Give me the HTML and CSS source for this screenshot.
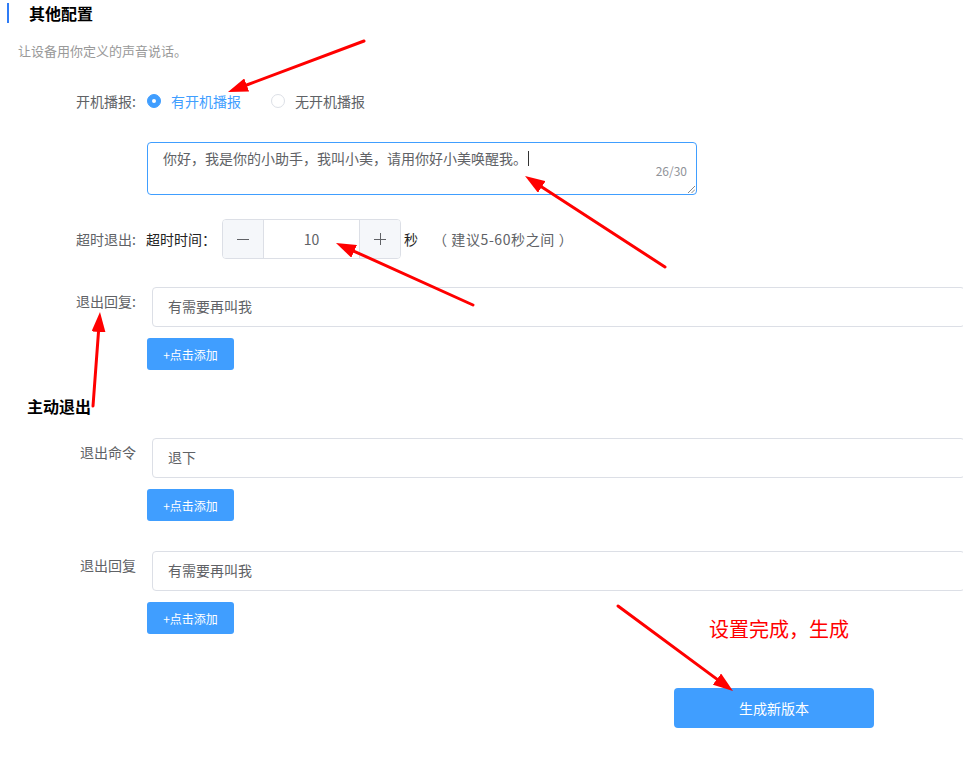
FILE: index.html
```html
<!DOCTYPE html>
<html lang="zh">
<head>
<meta charset="utf-8">
<link rel="stylesheet" href="styles.css">
</head>
<body>
<div class="page">
  <div class="title">其他配置</div>
  <div class="subtitle">让设备用你定义的声音说话。</div>

  <div class="row row-radio">
    <div class="label">开机播报:</div>
    <div class="radios">
      <span class="radio checked"><span class="dot"></span></span>
      <span class="radio-text active">有开机播报</span>
      <span class="radio"></span>
      <span class="radio-text">无开机播报</span>
    </div>
  </div>

  <div class="textarea">
    <span class="ta-text">你好，我是你的小助手，我叫小美，请用你好小美唤醒我。</span><span class="caret"></span>
    <span class="count">26/30</span>
    <svg class="resize" width="8" height="8" viewBox="0 0 8 8"><path d="M1 8 L8 1 M4.5 8 L8 4.5" stroke="#888" stroke-width="1"/></svg>
  </div>

  <div class="row row-timeout">
    <div class="label">超时退出:</div>
    <div class="timeout-name">超时时间：</div>
    <div class="number">
      <span class="num-btn minus"><svg width="12" height="12" viewBox="0 0 12 12"><path d="M0 6.5 H12" stroke="#606266" stroke-width="1"/></svg></span>
      <span class="num-val">10</span>
      <span class="num-btn plus"><svg width="12" height="12" viewBox="0 0 12 12"><path d="M0 6.5 H12 M6.5 0 V12" stroke="#606266" stroke-width="1"/></svg></span>
    </div>
    <div class="unit">秒</div>
    <div class="hint">（ 建议5-60秒之间 ）</div>
  </div>

  <div class="row row-field r1">
    <div class="label lab-top">退出回复:</div>
    <div class="input">有需要再叫我</div>
  </div>
  <button class="add">+点击添加</button>

  <div class="section">主动退出</div>

  <div class="row row-field r2">
    <div class="label lab-top">退出命令</div>
    <div class="input">退下</div>
  </div>
  <button class="add">+点击添加</button>

  <div class="row row-field r3">
    <div class="label lab-top">退出回复</div>
    <div class="input">有需要再叫我</div>
  </div>
  <button class="add">+点击添加</button>

  <div class="submit-wrap"><button class="submit">生成新版本</button></div>

  <div class="note">设置完成，生成</div>

  <svg class="arrows" width="963" height="760" viewBox="0 0 963 760">
    <defs>
      <marker id="ah" markerWidth="20" markerHeight="14" refX="0" refY="7" orient="auto" markerUnits="userSpaceOnUse">
        <path d="M0,0 L20,7 L0,14 z" fill="#ff0000"/>
      </marker>
    </defs>
    <g stroke="#ff0000" stroke-width="3" fill="none" stroke-linecap="round">
      <line x1="364" y1="41" x2="246.7" y2="85" marker-end="url(#ah)"/>
      <line x1="665" y1="267" x2="541.8" y2="186.9" marker-end="url(#ah)"/>
      <line x1="473" y1="305" x2="354.2" y2="251.3" marker-end="url(#ah)"/>
      <line x1="93" y1="406" x2="98.5" y2="331.9" marker-end="url(#ah)"/>
      <line x1="618" y1="606" x2="716.9" y2="679.1" marker-end="url(#ah)"/>
    </g>
  </svg>
</div>
</body>
</html>
```

FILE: styles.css
```css
html, body {
  margin: 0;
  padding: 0;
  background: #fff;
}
body {
  width: 963px;
  height: 760px;
  overflow: hidden;
  font-family: "Noto Sans CJK SC", "Noto Sans", sans-serif;
  font-size: 14px;
  color: #606266;
}
.page {
  position: relative;
  width: 963px;
  height: 760px;
  overflow: hidden;
}
.title {
  margin: 3px 0 0 7px;
  border-left: 2px solid #2f7cf6;
  padding-left: 20px;
  height: 20px;
  line-height: 20px;
  font-size: 16px;
  font-weight: bold;
  color: #000;
}
.subtitle {
  margin: 21px 0 0 18px;
  font-size: 13px;
  line-height: 14px;
  color: #999;
}
.row {
  display: flex;
  align-items: center;
}
.label {
  width: 136px;
  flex: none;
  text-align: right;
  color: #606266;
  font-size: 14px;
  line-height: 20px;
}
.row-radio {
  margin-top: 33px;
  height: 20px;
}
.radios {
  display: flex;
  align-items: center;
  margin-left: 11px;
}
.radio {
  width: 12px;
  height: 12px;
  border: 1px solid #dcdfe6;
  border-radius: 50%;
  background: #fff;
  display: flex;
  align-items: center;
  justify-content: center;
  margin-right: 10px;
}
.radio.checked {
  background: #409eff;
  border-color: #409eff;
}
.radio .dot {
  width: 4px;
  height: 4px;
  border-radius: 50%;
  background: #fff;
}
.radio-text {
  line-height: 20px;
  color: #606266;
  margin-right: 30px;
}
.radio-text.active {
  color: #409eff;
}
.textarea {
  position: relative;
  box-sizing: border-box;
  margin: 31px 0 0 147px;
  width: 550px;
  height: 53px;
  border: 1px solid #409eff;
  border-radius: 4px;
  padding: 5px 15px;
  line-height: 20px;
  color: #606266;
}
.caret {
  display: inline-block;
  width: 1px;
  height: 15px;
  background: #333;
  vertical-align: -2px;
  margin-left: 1px;
}
.count {
  position: absolute;
  right: 9px;
  top: 20px;
  font-size: 12px;
  line-height: 16px;
  color: #909399;
}
.resize {
  position: absolute;
  right: 1px;
  bottom: 1px;
}
.row-timeout {
  margin-top: 24px;
  height: 40px;
}
.timeout-name {
  margin-left: 10px;
  width: 70px;
  color: #222;
  line-height: 20px;
}
.number {
  margin-left: 6px;
  box-sizing: border-box;
  width: 179px;
  height: 40px;
  border: 1px solid #dcdfe6;
  border-radius: 4px;
  display: flex;
  overflow: hidden;
}
.num-btn {
  width: 40px;
  flex: none;
  background: #f5f7fa;
  display: flex;
  align-items: center;
  justify-content: center;
}
.minus { border-right: 1px solid #dcdfe6; }
.plus { border-left: 1px solid #dcdfe6; }
.num-val {
  flex: 1;
  text-align: center;
  line-height: 38px;
  color: #606266;
}
.unit {
  margin-left: 3px;
  color: #222;
}
.hint {
  margin-left: 15px;
  letter-spacing: 0.6px;
  color: #606266;
}
.row-field {
  align-items: flex-start;
}
.r1 { margin-top: 28px; }
.r2 { margin-top: 22px; }
.r3 { margin-top: 30px; }
.lab-top {
  line-height: 29px;
}
.input {
  margin-left: 16px;
  box-sizing: border-box;
  width: 813px;
  height: 40px;
  flex: none;
  border: 1px solid #dcdfe6;
  border-radius: 4px;
  padding: 0 15px;
  line-height: 37px;
  color: #606266;
}
.add {
  display: block;
  margin: 11px 0 0 147px;
  width: 87px;
  height: 32px;
  border: none;
  border-radius: 3px;
  background: #409eff;
  color: #fff;
  font-family: "Noto Sans CJK SC", sans-serif;
  font-size: 12px;
  padding: 0;
}
.section {
  margin: 26px 0 0 27px;
  font-size: 16px;
  line-height: 20px;
  font-weight: bold;
  color: #000;
}
.submit-wrap {
  margin-top: 54px;
  padding-left: 674px;
}
.submit {
  display: block;
  width: 200px;
  height: 40px;
  border: none;
  border-radius: 4px;
  background: #409eff;
  color: #fff;
  font-family: "Noto Sans CJK SC", sans-serif;
  font-size: 14px;
  padding: 0;
}
.note {
  position: absolute;
  left: 709px;
  top: 617px;
  font-size: 20px;
  line-height: 24px;
  color: #ff0000;
}
.arrows {
  position: absolute;
  left: 0;
  top: 0;
  pointer-events: none;
}
```
